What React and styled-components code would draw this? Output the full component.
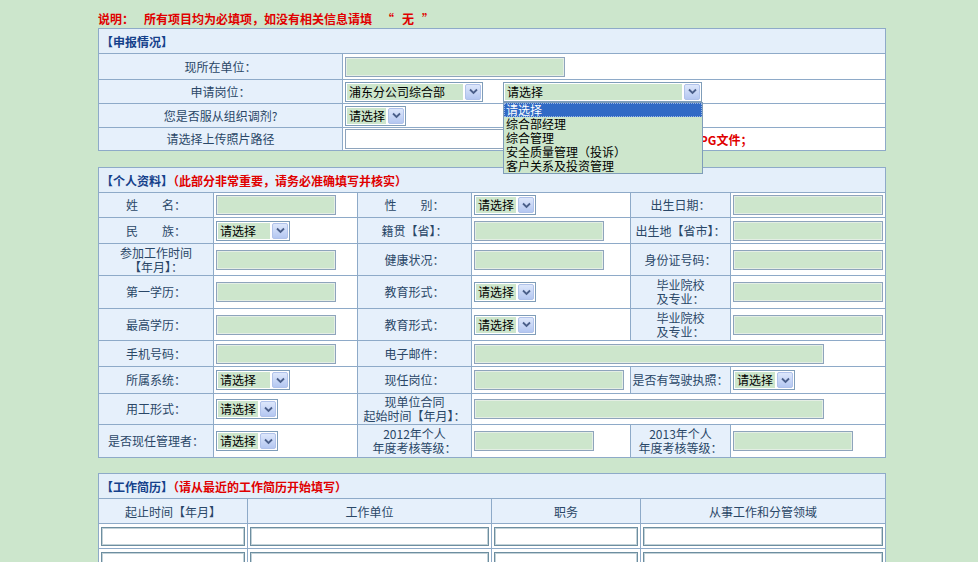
import styled, { createGlobalStyle } from 'styled-components';

const GlobalStyle = createGlobalStyle`
    body {
        margin: 0;
        background-color: #cce6cc;
        font-family: "Noto Sans CJK SC", "Liberation Sans", sans-serif;
        font-size: 12px;
    }
`;

const Page = styled.div`
    width: 787px;
    padding: 11px 0 0 98px;
`;

const Note = styled.div`
    color: #e00000;
    font-weight: bold;
    line-height: 15px;
    height: 17px;
    .gap { margin-left: 10px; }
    .quote { margin: 0 8px; }
`;

const Table = styled.table`
    width: 787px;
    border-collapse: collapse;
    table-layout: fixed;
    background-color: #fff;
    margin-bottom: ${p => p.$mb ?? 15}px;
    td {
        border: 1px solid #8eaac8;
        padding: 0;
    }
`;

const HeadCell = styled.td`
    height: 24px;
    background-color: #e4effa;
    color: #15418b;
    font-weight: bold;
    padding-left: 2px !important;
    .warn { color: #e00000; }
`;

const Label = styled.td`
    background-color: #e6f0fb;
    color: #2a4767;
    text-align: center;
    line-height: 14px;
    white-space: pre-line;
`;

const Value = styled.td`
    background-color: #fff;
    padding: 0 2px !important;
    position: relative;
`;

const Row = styled.tr`
    height: ${p => p.$h}px;
`;

const TextInput = styled.div`
    width: ${p => p.$w}px;
    height: 20px;
    box-sizing: border-box;
    border: 1px solid #8ea4bc;
    box-shadow: inset 0 0 0 1px #e4eee4;
    background-color: #cde6cc;
`;

const FileWrap = styled.div`
    display: flex;
    align-items: center;
    gap: 6px;
`;

const FileInput = styled.div`
    width: 306px;
    height: 20px;
    box-sizing: border-box;
    border: 1px solid #8ea4bc;
    background-color: #fff;
`;

const RedText = styled.span`
    color: #e00000;
    font-weight: bold;
`;

const SelectBox = styled.div`
    display: inline-flex;
    align-items: center;
    vertical-align: middle;
    width: ${p => p.$w}px;
    height: 20px;
    box-sizing: border-box;
    border: 1px solid #7f9db9;
    padding: 1px;
    background-color: #fff;
    color: #000;
`;

const SelectText = styled.span`
    flex: 1;
    height: 16px;
    line-height: 16px;
    padding-left: 2px;
    background-color: #cde6cc;
    overflow: hidden;
    white-space: nowrap;
`;

const Arrow = styled.span`
    width: 16px;
    height: 16px;
    margin-left: 2px;
    box-sizing: border-box;
    border: 1px solid #b0c2ea;
    border-radius: 2px;
    background: linear-gradient(#dde7fb, #b4c7f1);
    display: flex;
    align-items: center;
    justify-content: center;
`;

const SelectLine = styled.div`
    display: flex;
    align-items: center;
    gap: 20px;
    position: relative;
`;

const DropList = styled.div`
    position: absolute;
    left: 158px;
    top: 20px;
    width: 200px;
    box-sizing: border-box;
    border: 1px solid #7f9db9;
    background-color: #cde6cc;
    z-index: 5;
`;

const DropItem = styled.div`
    height: 14px;
    line-height: 14px;
    padding-left: 2px;
    color: ${p => (p.$active ? '#fff' : '#000')};
    background-color: ${p => (p.$active ? '#316ac5' : 'transparent')};
    outline: ${p => (p.$active ? '1px dotted #9bb6e4' : 'none')};
    outline-offset: -1px;
    white-space: nowrap;
`;

const WorkHead = styled.td`
    background-color: #e6f0fb;
    color: #2a4767;
    text-align: center;
`;

const WorkCell = styled.td`
    padding: 0 2px !important;
`;

const WorkInput = styled.div`
    height: 19px;
    box-sizing: border-box;
    border: 1px solid #6d8ea0;
    box-shadow: inset 0 0 0 1px #c3d2d8;
    background-color: #fff;
`;

function Select({ w, text = '请选择' }) {
    return (
        <SelectBox $w={w}>
            <SelectText>{text}</SelectText>
            <Arrow>
                <svg width="9" height="7" viewBox="0 0 9 7">
                    <path d="M1 1.5 L4.5 5 L8 1.5" fill="none" stroke="#4a5f8a" strokeWidth="1.8" />
                </svg>
            </Arrow>
        </SelectBox>
    );
}

function Field({ f }) {
    if (f.type === 'select') return <Select w={f.w} />;
    return <TextInput $w={f.w} />;
}

const people = [
    { h: 25, cells: ['姓　　名：', { w: 120 }, '性　　别：', { type: 'select', w: 62 }, '出生日期：', { w: 150 }] },
    { h: 26, cells: ['民　　族：', { type: 'select', w: 74 }, '籍贯【省】：', { w: 130 }, '出生地【省市】：', { w: 150 }] },
    { h: 32, cells: ['参加工作时间\n【年月】：', { w: 120 }, '健康状况：', { w: 130 }, '身份证号码：', { w: 150 }] },
    { h: 33, cells: ['第一学历：', { w: 120 }, '教育形式：', { type: 'select', w: 62 }, '毕业院校\n及专业：', { w: 150 }] },
    { h: 32, cells: ['最高学历：', { w: 120 }, '教育形式：', { type: 'select', w: 62 }, '毕业院校\n及专业：', { w: 150 }] },
    { h: 26, cells: ['手机号码：', { w: 120 }, '电子邮件：', { w: 350, span: 3 }] },
    { h: 27, cells: ['所属系统：', { type: 'select', w: 74 }, '现任岗位：', { w: 150 }, '是否有驾驶执照：', { type: 'select', w: 62 }] },
    { h: 31, cells: ['用工形式：', { type: 'select', w: 62 }, '现单位合同\n起始时间【年月】：', { w: 350, span: 3 }] },
    { h: 33, cells: ['是否现任管理者：', { type: 'select', w: 62 }, '2012年个人\n年度考核等级：', { w: 120 }, '2013年个人\n年度考核等级：', { w: 120 }] },
];

const posts = ['请选择', '综合部经理', '综合管理', '安全质量管理（投诉）', '客户关系及投资管理'];

export default function App() {
    return (
        <Page>
            <GlobalStyle />
            <Note>
                说明：<span className="gap">所有项目均为必填项，如没有相关信息请填<span className="gap">“<span className="quote">无</span>”</span></span>
            </Note>

            <Table $mb={16}>
                <colgroup>
                    <col width="244" />
                    <col width="543" />
                </colgroup>
                <tbody>
                    <tr><HeadCell colSpan={2}>【申报情况】</HeadCell></tr>
                    <Row $h={26}>
                        <Label>现所在单位：</Label>
                        <Value><TextInput $w={220} /></Value>
                    </Row>
                    <Row $h={24}>
                        <Label>申请岗位：</Label>
                        <Value>
                            <SelectLine>
                                <Select w={138} text="浦东分公司综合部" />
                                <Select w={199} />
                                <DropList>
                                    {posts.map((p, i) => (
                                        <DropItem key={i} $active={i === 0}>{p}</DropItem>
                                    ))}
                                </DropList>
                            </SelectLine>
                        </Value>
                    </Row>
                    <Row $h={24}>
                        <Label>您是否服从组织调剂?</Label>
                        <Value><Select w={61} /></Value>
                    </Row>
                    <Row $h={23}>
                        <Label>请选择上传照片路径</Label>
                        <Value>
                            <FileWrap>
                                <FileInput />
                                <RedText>请上传JPG文件；</RedText>
                            </FileWrap>
                        </Value>
                    </Row>
                </tbody>
            </Table>

            <Table $mb={15}>
                <colgroup>
                    <col width="115" />
                    <col width="144" />
                    <col width="114" />
                    <col width="159" />
                    <col width="100" />
                    <col width="155" />
                </colgroup>
                <tbody>
                    <tr>
                        <HeadCell colSpan={6}>
                            【个人资料】<span className="warn">（此部分非常重要，请务必准确填写并核实）</span>
                        </HeadCell>
                    </tr>
                    {people.map((r, i) => (
                        <Row $h={r.h} key={i}>
                            {r.cells.map((c, j) =>
                                typeof c === 'string' ? (
                                    <Label key={j}>{c}</Label>
                                ) : (
                                    <Value key={j} colSpan={c.span || 1}><Field f={c} /></Value>
                                )
                            )}
                        </Row>
                    ))}
                </tbody>
            </Table>

            <Table>
                <colgroup>
                    <col width="149" />
                    <col width="244" />
                    <col width="149" />
                    <col width="245" />
                </colgroup>
                <tbody>
                    <tr>
                        <HeadCell colSpan={4}>
                            【工作简历】<span className="warn">（请从最近的工作简历开始填写）</span>
                        </HeadCell>
                    </tr>
                    <Row $h={25}>
                        <WorkHead>起止时间【年月】</WorkHead>
                        <WorkHead>工作单位</WorkHead>
                        <WorkHead>职务</WorkHead>
                        <WorkHead>从事工作和分管领域</WorkHead>
                    </Row>
                    {[0, 1, 2, 3].map(i => (
                        <Row $h={25} key={i}>
                            {[0, 1, 2, 3].map(j => (
                                <WorkCell key={j}><WorkInput /></WorkCell>
                            ))}
                        </Row>
                    ))}
                </tbody>
            </Table>
        </Page>
    );
}
